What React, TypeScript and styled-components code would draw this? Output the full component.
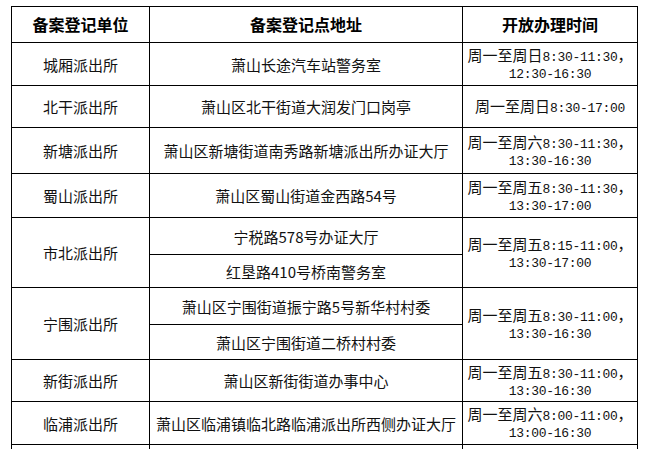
import styled, { createGlobalStyle } from "styled-components";

const GlobalStyle = createGlobalStyle`
  html, body {
    margin: 0;
    padding: 0;
    background: #fff;
    overflow: hidden;
  }
  body {
    font-family: "Noto Sans CJK SC", sans-serif;
    color: #111;
  }
`;

type Row = {
  unit: string;
  places: string[];
  days: string;
  first: string;
  second?: string;
  heights: number[];
};

const rows: Row[] = [
  { unit: "城厢派出所", places: ["萧山长途汽车站警务室"], days: "周一至周日", first: "8:30-11:30", second: "12:30-16:30", heights: [43] },
  { unit: "北干派出所", places: ["萧山区北干街道大润发门口岗亭"], days: "周一至周日", first: "8:30-17:00", heights: [42] },
  { unit: "新塘派出所", places: ["萧山区新塘街道南秀路新塘派出所办证大厅"], days: "周一至周六", first: "8:30-11:30", second: "13:30-16:30", heights: [46] },
  { unit: "蜀山派出所", places: ["萧山区蜀山街道金西路54号"], days: "周一至周五", first: "8:30-11:30", second: "13:30-17:00", heights: [44] },
  { unit: "市北派出所", places: ["宁税路578号办证大厅", "红垦路410号桥南警务室"], days: "周一至周五", first: "8:15-11:00", second: "13:30-17:00", heights: [37, 33] },
  { unit: "宁围派出所", places: ["萧山区宁围街道振宁路5号新华村村委", "萧山区宁围街道二桥村村委"], days: "周一至周五", first: "8:30-11:00", second: "13:30-16:30", heights: [37, 35] },
  { unit: "新街派出所", places: ["萧山区新街街道办事中心"], days: "周一至周五", first: "8:30-11:00", second: "13:30-16:30", heights: [42] },
  { unit: "临浦派出所", places: ["萧山区临浦镇临北路临浦派出所西侧办证大厅"], days: "周一至周六", first: "8:00-11:00", second: "13:00-16:30", heights: [43] },
];

const Frame = styled.div`
  padding: 6px 0 0 11px;
`;

const Table = styled.table`
  border-collapse: collapse;
  table-layout: fixed;
  width: 626px;
`;

const Line = styled.tr<{ $h: number }>`
  height: ${(p) => p.$h}px;
`;

const Cell = styled.td`
  border: 1px solid #000;
  padding: 0 2px;
  text-align: center;
  vertical-align: middle;
  font-size: 15px;
  line-height: 17px;
  color: #111;
  white-space: nowrap;
  overflow: hidden;
`;

const HeadCell = styled(Cell).attrs({ as: "th" })`
  font-size: 16px;
  font-weight: bold;
  color: #000;
`;

const TimeCell = styled(Cell)`
  line-height: 16px;
`;

const Num = styled.span`
  font-family: "Liberation Mono", monospace;
  font-size: 13px;
  line-height: 1;
  letter-spacing: -0.3px;
`;

const Hours = ({ days, first, second }: { days: string; first: string; second?: string }) => (
  <>
    {days}
    <Num>{first}</Num>
    {second && (
      <>
        ，
        <br />
        <Num>{second}</Num>
      </>
    )}
  </>
);

export default function App() {
  return (
    <>
      <GlobalStyle />
      <Frame>
        <Table>
          <colgroup>
            <col style={{ width: 138 }} />
            <col style={{ width: 313 }} />
            <col style={{ width: 175 }} />
          </colgroup>
          <tbody>
            <Line $h={36}>
              <HeadCell>备案登记单位</HeadCell>
              <HeadCell>备案登记点地址</HeadCell>
              <HeadCell>开放办理时间</HeadCell>
            </Line>
            {rows.map((r) =>
              r.places.map((place, i) => (
                <Line $h={r.heights[i]} key={r.unit + i}>
                  {i === 0 && <Cell rowSpan={r.places.length}>{r.unit}</Cell>}
                  <Cell>{place}</Cell>
                  {i === 0 && (
                    <TimeCell rowSpan={r.places.length}>
                      <Hours days={r.days} first={r.first} second={r.second} />
                    </TimeCell>
                  )}
                </Line>
              ))
            )}
            <Line $h={20}>
              <Cell />
              <Cell />
              <Cell />
            </Line>
          </tbody>
        </Table>
      </Frame>
    </>
  );
}
